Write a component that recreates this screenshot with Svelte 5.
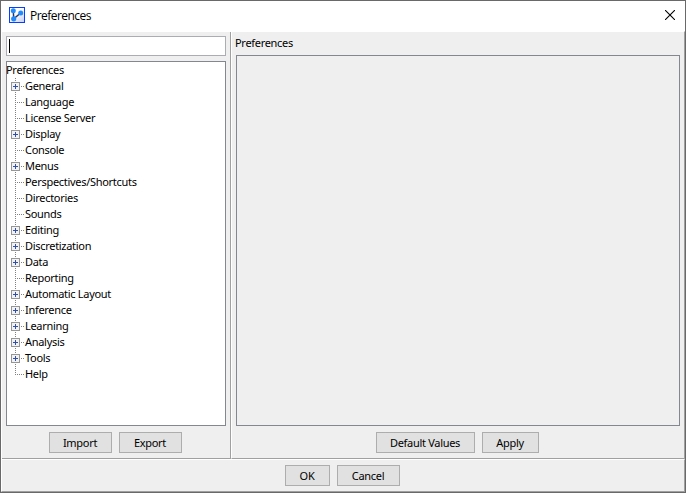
<script lang="ts">
  type Item = { label: string; children?: boolean };

  const items: Item[] = [
    { label: 'General', children: true },
    { label: 'Language' },
    { label: 'License Server' },
    { label: 'Display', children: true },
    { label: 'Console' },
    { label: 'Menus', children: true },
    { label: 'Perspectives/Shortcuts' },
    { label: 'Directories' },
    { label: 'Sounds' },
    { label: 'Editing', children: true },
    { label: 'Discretization', children: true },
    { label: 'Data', children: true },
    { label: 'Reporting' },
    { label: 'Automatic Layout', children: true },
    { label: 'Inference', children: true },
    { label: 'Learning', children: true },
    { label: 'Analysis', children: true },
    { label: 'Tools', children: true },
    { label: 'Help' }
  ];
</script>

<div class="window">
  <header class="titlebar">
    <svg class="logo" width="16" height="16" viewBox="0 0 16 16">
      <defs>
        <linearGradient id="bg" x1="0" y1="0" x2="1" y2="1">
          <stop offset="0.4" stop-color="#fff" />
          <stop offset="1" stop-color="#c0cdf0" />
        </linearGradient>
      </defs>
      <rect x="0.5" y="0.5" width="15" height="15" fill="url(#bg)" stroke="#0a3cff" />
      <path d="M4.3 3.7L4.7 11.8L11.7 6" fill="none" stroke="#2a3558" stroke-width="1.5" />
      <circle cx="4.3" cy="3.7" r="2.5" fill="#1e8cff" />
      <circle cx="11.7" cy="6" r="2.5" fill="#1e8cff" />
      <circle cx="4.7" cy="11.8" r="2.6" fill="#1e8cff" />
    </svg>
    <span class="title">Preferences</span>
    <svg class="close" width="10" height="10" viewBox="0 0 10 10">
      <path d="M0 0L10 10M10 0L0 10" stroke="#000" stroke-width="1.1" />
    </svg>
  </header>

  <main class="panes">
    <section class="left">
      <div class="search"><span class="caret"></span></div>
      <div class="tree">
        <div class="root">Preferences</div>
        {#each items as item, i}
          <div class="row">
            <svg class="branch" width="18" height="16" viewBox="0 0 18 16" shape-rendering="crispEdges">
              <path d={i === items.length - 1 ? 'M8.5 0V8' : 'M8.5 0V16'} class="dots" />
              <path d="M8 8.5H18" class="dots" />
              {#if item.children}
                <rect x="4.5" y="4.5" width="8" height="8" fill="#f2f2f2" stroke="#969696" />
                <path d="M6 8.5H11M8.5 6V11" stroke="#3050a8" />
              {/if}
            </svg>
            <span class="label">{item.label}</span>
          </div>
        {/each}
      </div>
      <div class="buttons">
        <button class="w63">Import</button>
        <button class="w63">Export</button>
      </div>
    </section>
    <section class="right">
      <div class="heading">Preferences</div>
      <div class="content"></div>
      <div class="buttons">
        <button class="w99">Default Values</button>
        <button class="w57">Apply</button>
      </div>
    </section>
  </main>

  <footer class="footer">
    <button class="w45">OK</button>
    <button class="w63">Cancel</button>
  </footer>
</div>

<style>
  .window {
    box-sizing: border-box;
    width: 686px;
    height: 493px;
    border: 1px solid #696969;
    background: #efefef;
    display: flex;
    flex-direction: column;
    font-family: 'Noto Sans', sans-serif;
    font-size: 11px;
    line-height: 16px;
    letter-spacing: -0.3px;
    color: #000;
    overflow: hidden;
  }

  .titlebar {
    flex: none;
    box-sizing: border-box;
    height: 30px;
    padding: 0 10px 2px 8px;
    background: #fff;
    display: flex;
    align-items: center;
  }

  .title {
    flex: 1;
    margin-left: 5px;
    padding-top: 2px;
    font-family: 'Open Sans', sans-serif;
    font-size: 12px;
    letter-spacing: -0.55px;
  }

  .panes {
    flex: none;
    box-sizing: border-box;
    height: 428px;
    border-top: 1px solid #fff;
    border-left: 1px solid #fff;
    border-right: 1px solid #a0a0a0;
    display: flex;
  }

  .left,
  .right {
    box-sizing: border-box;
    display: flex;
    flex-direction: column;
    border-bottom: 1px solid #a0a0a0;
  }

  .left {
    width: 229px;
    padding: 4px 4px 0;
    border-right: 1px solid #a0a0a0;
  }

  .right {
    flex: 1;
    padding: 0 4px;
    border-left: 1px solid #fff;
  }

  .search {
    box-sizing: border-box;
    height: 20px;
    padding: 2px;
    border: 1px solid #abadb3;
    background: #fff;
  }

  .caret {
    display: block;
    width: 1px;
    height: 14px;
    background: #000;
  }

  .tree {
    box-sizing: border-box;
    height: 365px;
    margin-top: 5px;
    border: 1px solid #828790;
    background: #fff;
  }

  .row {
    display: flex;
    height: 16px;
  }

  .root {
    height: 16px;
    margin-left: -1px;
  }

  .label {
    white-space: nowrap;
  }

  .dots {
    fill: none;
    stroke: #808080;
    stroke-dasharray: 1 1;
  }

  .heading {
    height: 23px;
    box-sizing: border-box;
    margin-left: -1px;
    padding-top: 3px;
  }

  .content {
    box-sizing: border-box;
    height: 371px;
    border: 1px solid #828790;
  }

  .buttons {
    display: flex;
    justify-content: center;
    gap: 7px;
    margin-top: 6px;
    padding-right: 2px;
  }

  button {
    box-sizing: border-box;
    height: 21px;
    padding: 0;
    border: 1px solid #adadad;
    background: #e1e1e1;
    color: #000;
    font: inherit;
    line-height: 19px;
    letter-spacing: inherit;
  }

  .w45 {
    width: 45px;
  }

  .w57 {
    width: 57px;
  }

  .w63 {
    width: 63px;
  }

  .w99 {
    width: 99px;
  }

  .footer {
    flex: 1;
    box-sizing: border-box;
    padding: 5px 2px 0 0;
    border-top: 1px solid #fff;
    border-left: 1px solid #fff;
    border-right: 1px solid #a0a0a0;
    border-bottom: 1px solid #a0a0a0;
    display: flex;
    justify-content: center;
    gap: 7px;
  }
</style>
